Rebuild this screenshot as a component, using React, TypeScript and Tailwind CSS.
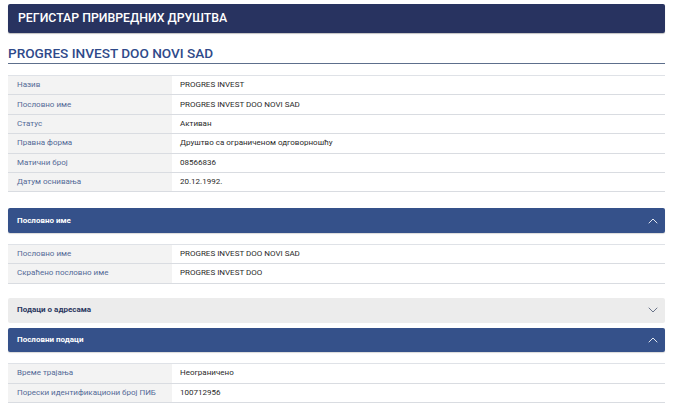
import React from 'react';
import { ChevronUp, ChevronDown } from 'lucide-react';

type Row = { label: string; value: string };

const basicRows: Row[] = [
  { label: 'Назив', value: 'PROGRES INVEST' },
  { label: 'Пословно име', value: 'PROGRES INVEST DOO NOVI SAD' },
  { label: 'Статус', value: 'Активан' },
  { label: 'Правна форма', value: 'Друштво са ограниченом одговорношћу' },
  { label: 'Матични број', value: '08566836' },
  { label: 'Датум оснивања', value: '20.12.1992.' },
];

const nameRows: Row[] = [
  { label: 'Пословно име', value: 'PROGRES INVEST DOO NOVI SAD' },
  { label: 'Скраћено пословно име', value: 'PROGRES INVEST DOO' },
];

const businessRows: Row[] = [
  { label: 'Време трајања', value: 'Неограничено' },
  { label: 'Порески идентификациони број ПИБ', value: '100712956' },
];

function DataTable({ rows }: { rows: Row[] }) {
  return (
    <div className="border-t border-[#dfe2e7]">
      {rows.map((row) => (
        <div key={row.label} className="flex h-[19.4px] border-b border-[#d9dce1] text-[8px]">
          <div className="flex w-[164px] items-center bg-[#f3f3f3] pl-[9px] text-[#546a97]">{row.label}</div>
          <div className="flex flex-1 items-center pl-[8px] text-[#2a2a2a]">{row.value}</div>
        </div>
      ))}
    </div>
  );
}

function SectionBar({ title, open }: { title: string; open: boolean }) {
  return (
    <div
      className={`flex h-[24.5px] items-center justify-between rounded-[2px] pl-[9px] pr-[4px] text-[8px] font-bold ${
        open ? 'bg-[#35518a] text-white shadow-[0_1px_1px_rgba(0,0,0,0.15)]' : 'bg-[#ececec] text-[#2b3760]'
      }`}
    >
      <span>{title}</span>
      {open ? (
        <ChevronUp className="h-[16px] w-[16px] text-white" strokeWidth={1.3} />
      ) : (
        <ChevronDown className="h-[16px] w-[16px] text-[#55607a]" strokeWidth={1.3} />
      )}
    </div>
  );
}

export default function App() {
  return (
    <div className="min-h-[407px] w-[680px] bg-white pt-[4px] pl-[8px] pr-[15px] font-['Roboto',sans-serif]">
      {/* Register header */}
      <div className="flex h-[29px] items-center rounded-[2px] bg-[#283360] px-[10px] text-[12.3px] font-medium text-white shadow-[0_1px_1px_rgba(0,0,0,0.25)]">
        РЕГИСТАР ПРИВРЕДНИХ ДРУШТВА
      </div>

      {/* Company title */}
      <h1 className="mt-[11px] border-b-[1.5px] border-[#5d6f8c] text-[13.6px] font-medium leading-[19px] text-[#2f4a8a]">
        PROGRES INVEST DOO NOVI SAD
      </h1>

      <div className="mt-[11px]">
        <DataTable rows={basicRows} />
      </div>

      <div className="mt-[16px]">
        <SectionBar title="Пословно име" open />
      </div>
      <div className="mt-[11px]">
        <DataTable rows={nameRows} />
      </div>

      <div className="mt-[14.5px]">
        <SectionBar title="Подаци о адресама" open={false} />
      </div>
      <div className="mt-[5px]">
        <SectionBar title="Пословни подаци" open />
      </div>
      <div className="mt-[11px]">
        <DataTable rows={businessRows} />
      </div>
    </div>
  );
}
